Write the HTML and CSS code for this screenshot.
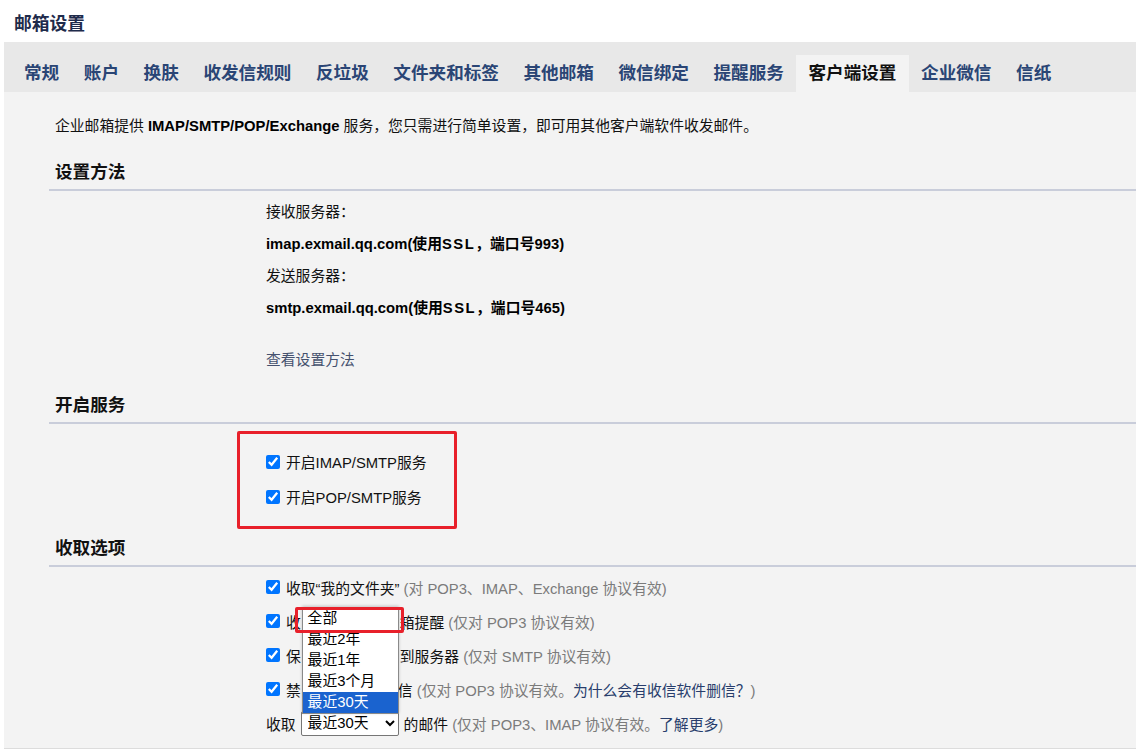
FILE: index.html
```html
<!DOCTYPE html>
<html lang="zh-CN">
<head>
  <meta charset="UTF-8">
  <meta name="viewport" content="width=device-width, initial-scale=1.0">
  <title>邮箱设置</title>
  <link rel="stylesheet" href="styles.css">
</head>
<body>
  <h1 class="page-title">邮箱设置</h1>

  <div class="panel">
    <ul class="tabs">
      <li>常规</li>
      <li>账户</li>
      <li>换肤</li>
      <li>收发信规则</li>
      <li>反垃圾</li>
      <li>文件夹和标签</li>
      <li>其他邮箱</li>
      <li>微信绑定</li>
      <li>提醒服务</li>
      <li class="active">客户端设置</li>
      <li>企业微信</li>
      <li>信纸</li>
    </ul>

    <div class="content">
      <p class="intro">企业邮箱提供 <b>IMAP/SMTP/POP/Exchange</b> 服务，您只需进行简单设置，即可用其他客户端软件收发邮件。</p>

      <div class="section">
        <h2>设置方法</h2>
        <div class="server-rows">
          <div class="row">接收服务器：</div>
          <div class="row"><b>imap.exmail.qq.com(使用<span class="wide">SSL</span>，端口号993)</b></div>
          <div class="row">发送服务器：</div>
          <div class="row"><b>smtp.exmail.qq.com(使用<span class="wide">SSL</span>，端口号465)</b></div>
          <div class="row guide"><a href="#">查看设置方法</a></div>
        </div>
      </div>

      <div class="section">
        <h2>开启服务</h2>
        <div class="service-box">
          <label class="row check"><input type="checkbox" checked>开启IMAP/SMTP服务</label>
          <label class="row check"><input type="checkbox" checked>开启POP/SMTP服务</label>
        </div>
      </div>

      <div class="section">
        <h2>收取选项</h2>
        <div class="option-rows">
          <label class="row check"><input type="checkbox" checked>收取“我的文件夹”<span class="note">&nbsp;(对 POP3、IMAP、Exchange 协议有效)</span></label>
          <!-- the open select list covers the middle of the next three labels -->
          <label class="row check"><input type="checkbox" checked>收<span class="covered"></span>箱提醒<span class="note">&nbsp;(仅对 POP3 协议有效)</span></label>
          <label class="row check"><input type="checkbox" checked>保<span class="covered"></span>到服务器<span class="note">&nbsp;(仅对 SMTP 协议有效)</span></label>
          <label class="row check"><input type="checkbox" checked>禁<span class="covered short"></span>信<span class="note">&nbsp;(仅对 POP3 协议有效。<a href="#">为什么会有收信软件删信？</a>)</span></label>
          <div class="row">
            收取
            <span class="select-wrap">
              <select class="range">
                <option>全部</option>
                <option>最近2年</option>
                <option>最近1年</option>
                <option>最近3个月</option>
                <option selected>最近30天</option>
              </select>
              <ul class="dropdown">
                <li class="focus">全部</li>
                <li>最近2年</li>
                <li>最近1年</li>
                <li>最近3个月</li>
                <li class="selected">最近30天</li>
              </ul>
            </span>
            的邮件<span class="note">&nbsp;(仅对 POP3、IMAP 协议有效。<a href="#">了解更多</a>)</span>
          </div>
        </div>
      </div>
    </div>
  </div>
</body>
</html>
```

FILE: styles.css
```css
body {
  margin: 0;
  background-color: #fff;
  color: #111;
  font-family: "Liberation Sans", Arial, "Noto Sans CJK SC", sans-serif;
  font-size: 14.8px;
}

.page-title {
  margin: 0;
  padding: 12px 0 6px 14px;
  font-size: 17.8px;
  line-height: 24px;
  color: #1e2b4b;
}

.panel {
  margin-left: 4px;
  background-color: #f3f3f3;
  border-bottom: 1px solid #dcdcdc;
}

/* tab bar */
.tabs {
  display: flex;
  align-items: flex-end;
  height: 50px;
  margin: 0;
  padding: 0 0 0 7.7px;
  list-style: none;
  background-color: #e8e8e8;
}
.tabs li {
  height: 37px;
  padding: 0 12.3px;
  line-height: 37px;
  font-size: 17.6px;
  font-weight: bold;
  color: #2a4575;
  white-space: nowrap;
}
.tabs li.active {
  background-color: #f3f3f3;
  color: #111;
}

.content {
  padding: 24px 0 8px 45px;
}
.intro {
  margin: 0 0 0 6px;
  line-height: 20px;
}
.intro b {
  color: #000;
}

.section {
  margin-top: 24px;
}
.section + .section {
  margin-top: 19px;
}
.section h2 {
  margin: 0;
  padding: 0 0 5px 6px;
  font-size: 17.6px;
  line-height: 24px;
  color: #111;
  border-bottom: 2px solid #c9cdda;
}

.row {
  display: flex;
  align-items: center;
  white-space: nowrap;
}

.server-rows {
  padding: 3px 0 0 217px;
}
.server-rows .row {
  height: 32px;
}
.server-rows b {
  color: #000;
}
.server-rows .wide {
  letter-spacing: 1.5px;
}
.server-rows .guide {
  margin-top: 20px;
}
a {
  color: #34466e;
  text-decoration: none;
}
.guide a {
  color: #45516e;
}

.check input {
  width: 14px;
  height: 14px;
  margin: 0 6px 0 0;
}

.service-box {
  box-sizing: border-box;
  width: 220px;
  margin: 7px 0 0 188px;
  padding: 10px 0 12px 26px;
  border: 3px solid #e8202a;
  border-radius: 2px;
}
.service-box .row {
  height: 35px;
}

.section:last-child {
  margin-top: 7px;
}
.option-rows {
  padding: 3px 0 0 217px;
}
.option-rows .row {
  height: 34px;
}
.covered {
  display: inline-block;
  width: 99px;
}
.covered.short {
  width: 97px;
}
.note {
  color: #7b7b7b;
}
.note a {
  color: #283d6c;
}

.select-wrap {
  position: relative;
  display: inline-block;
  margin: 0 5px;
}
.range {
  width: 98px;
  height: 25px;
  padding: 0 0 0 2px;
  font-family: inherit;
  font-size: 14.8px;
  color: #000;
  background-color: #fff;
  border: 1px solid #767676;
  border-radius: 2px;
}

/* the open list of the select */
.dropdown {
  position: absolute;
  left: 1px;
  bottom: 22px;
  z-index: 2;
  width: 97px;
  margin: 0;
  padding: 0;
  list-style: none;
  background-color: #fff;
  border: 1px solid #8a8a8a;
  box-shadow: 0 -1px 3px rgba(0, 0, 0, 0.2);
  box-sizing: border-box;
}
.dropdown li {
  height: 21px;
  padding-left: 5px;
  line-height: 21px;
  color: #000;
}
.dropdown li.selected {
  background-color: #1a63cf;
  color: #fff;
}
.dropdown li.focus {
  position: relative;
}
.dropdown li.focus::after {
  content: "";
  position: absolute;
  left: -8px;
  right: -6px;
  top: -1px;
  bottom: -4px;
  border: 3px solid #e8202a;
  border-radius: 2px;
}
```
